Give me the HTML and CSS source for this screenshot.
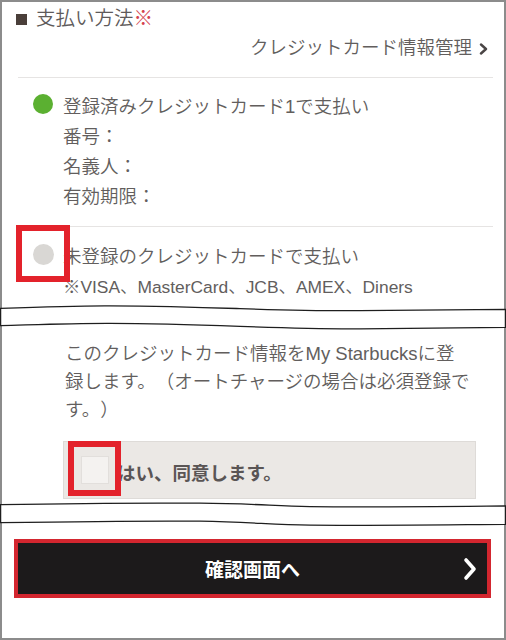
FILE: index.html
```html
<!DOCTYPE html>
<html lang="ja">
<head>
<meta charset="utf-8">
<title>支払い方法</title>
<link rel="stylesheet" href="styles.css">
</head>
<body>
<div class="frame">
  <section class="sec sec-pay">
    <h2 class="title"><span class="sq"></span>支払い方法<span class="req">※</span></h2>
    <div class="manage">クレジットカード情報管理<svg class="manage-chev" width="9" height="12" viewBox="0 0 9 12"><polyline points="2,1.5 7,6 2,10.5" fill="none" stroke="#4a4545" stroke-width="2.4" stroke-linecap="round" stroke-linejoin="round"/></svg></div>
    <hr class="rule">
    <div class="option">
      <span class="radio radio-on"></span>
      <div class="opt-text">
        <div>登録済みクレジットカード1で支払い</div>
        <div>番号：</div>
        <div>名義人：</div>
        <div>有効期限：</div>
      </div>
    </div>
    <hr class="rule rule2">
    <div class="option option2">
      <span class="radio radio-off"><span class="hl hl-radio"></span></span>
      <div class="opt-text">
        <div>未登録のクレジットカードで支払い</div>
        <div class="brands">※VISA、MasterCard、JCB、AMEX、Diners</div>
      </div>
    </div>
  </section>

  <div class="tear">
    <svg width="506" height="28" viewBox="0 0 506 28"><path d="M0.6 5.3 C50 3.5 80 2.6 110 2.8 C170 3.2 210 4.6 240 5.6 C290 7.2 320 7.9 360 7.6 C420 7 470 6.4 505.4 6.3 L505.4 24.3 C470 24.6 420 25.4 360 25.8 C320 26 290 25.2 240 23.4 C200 22 160 20.6 110 20.4 C70 20.3 40 21.6 0.6 22.7 Z" fill="#fff" stroke="#1e1e1e" stroke-width="1.3"/></svg>
  </div>

  <section class="sec sec-agree">
    <p class="note">このクレジットカード情報をMy Starbucksに登<br>録します。（オートチャージの場合は必須登録で<br>す。）</p>
    <div class="agree">
      <span class="check"><span class="hl hl-check"></span></span>
      <span class="agree-text">はい、同意します。</span>
    </div>
  </section>

  <div class="tear">
    <svg width="506" height="28" viewBox="0 0 506 28"><path d="M0.6 5.7 C60 4.6 140 3.8 200 4.2 C250 4.6 270 6.6 310 7.6 C370 8.4 440 7.6 505.4 7 L505.4 25.3 C440 25.8 370 26.6 310 26.2 C270 25.6 250 23 200 22.2 C140 21.6 60 22.8 0.6 23.7 Z" fill="#fff" stroke="#1e1e1e" stroke-width="1.3"/></svg>
  </div>

  <section class="sec sec-btn">
    <div class="btn">
      <span class="btn-label">確認画面へ</span>
      <svg class="btn-chev" width="14" height="24" viewBox="0 0 14 24"><polyline points="3,3 11,12 3,21" fill="none" stroke="#fff" stroke-width="3.6" stroke-linecap="round" stroke-linejoin="round"/></svg>
    </div>
  </section>
</div>
</body>
</html>
```

FILE: styles.css
```css
* { box-sizing: border-box; }
html, body { margin: 0; padding: 0; background: #fff; }
body {
  font-family: "Liberation Sans", "Noto Sans CJK JP", sans-serif;
  color: #625e5d;
  font-size: 18.5px;
  font-weight: 350;
  text-spacing-trim: space-all;
}
.frame {
  width: 506px;
  height: 640px;
  border: 2px solid #8c8c8c;
  background: #fff;
  display: flex;
  flex-direction: column;
}
.sec-pay { padding: 1px 11px 1px 14px; }
.title {
  margin: 0;
  font-size: 19.5px;
  font-weight: 350;
  line-height: 30px;
  display: flex;
  align-items: center;
  color: #5e5a5a;
}
.sq {
  width: 11px;
  height: 11px;
  background: #4a3f3a;
  margin-right: 9px;
  margin-top: 3px;
}
.req { color: #d4434f; }
.manage {
  display: flex;
  justify-content: flex-end;
  align-items: center;
  line-height: 30px;
  padding-right: 5px;
}
.manage-chev { margin-left: 7px; margin-top: 1px; }
.rule {
  border: 0;
  border-top: 1px solid #e6e4e3;
  margin: 14px 0 0 2px;
  height: 0;
}
.option {
  display: flex;
  align-items: flex-start;
  margin-top: 14px;
  padding-left: 17px;
  line-height: 30px;
}
.option2 { margin-top: 15px; }
.radio {
  position: relative;
  flex: none;
  width: 20px;
  height: 20px;
  border-radius: 50%;
  margin-top: 2px;
  margin-right: 10px;
}
.radio-on { background: #5bb031; }
.radio-off { background: #d9d7d4; width: 21px; height: 21px; margin-right: 9px; }
.brands { font-size: 17.4px; }
.hl {
  position: absolute;
  border: 6px solid #e3222b;
}
.hl-radio { left: -17px; top: -19px; width: 54px; height: 57px; }

.tear { margin: 0 -2px; height: 28px; position: relative; z-index: 1; }
.tear svg { display: block; }

.sec-agree { padding: 9px 28px 0 61px; }
.note {
  margin: 0;
  padding-left: 2px;
  line-height: 28px;
  white-space: nowrap;
}
.agree {
  margin-top: 17px;
  height: 58px;
  background: #ebe8e5;
  border: 1px solid #dedbd8;
  display: flex;
  align-items: center;
  padding-left: 17px;
}
.check {
  position: relative;
  flex: none;
  width: 28px;
  height: 28px;
  background: #f4f2f0;
  border: 1px solid #e2dfdc;
  margin-right: 8px;
}
.hl-check { left: -14px; top: -16px; width: 53px; height: 55px; }
.agree-text {
  font-weight: bold;
  color: #5a5555;
  margin-top: 4px;
}
.sec-btn { padding: 12px 13px 0 12px; }
.btn {
  height: 59px;
  background: #1c1a1b;
  border: 4px solid #d3262f;
  display: flex;
  align-items: center;
  justify-content: center;
  position: relative;
}
.btn-label {
  color: #fff;
  font-weight: bold;
  font-size: 19px;
}
.btn-chev { position: absolute; right: 10px; top: 14px; }
```
